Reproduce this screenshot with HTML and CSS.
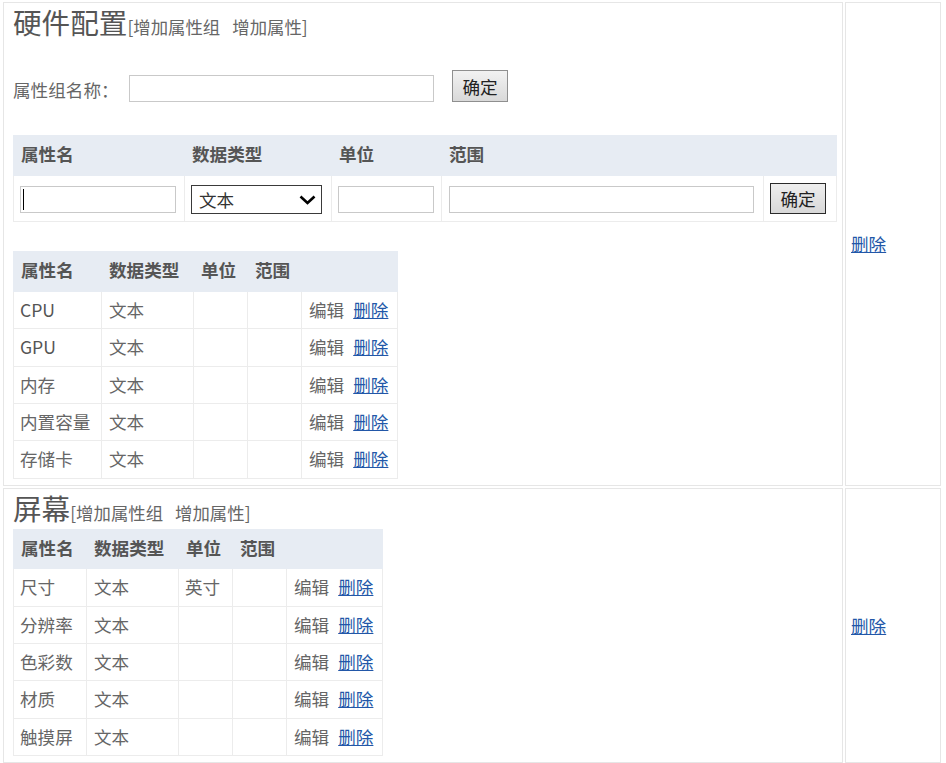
FILE: index.html
```html
<!DOCTYPE html>
<html lang="zh-CN">
<head>
<meta charset="utf-8">
<title>属性配置</title>
<link rel="stylesheet" href="styles.css">
</head>
<body>
<table class="layout">
  <tr>
    <td class="main">
      <div class="gtitle"><span class="gname">硬件配置</span><span class="gops">[<a href="#">增加属性组</a><a href="#" class="op2">增加属性</a>]</span></div>
      <div class="gform">
        <label class="glabel">属性组名称：</label>
        <input class="txt gname-input" type="text">
        <button class="btn">确定</button>
      </div>
      <table class="grid add-grid">
        <colgroup><col class="a1"><col class="a2"><col class="a3"><col class="a4"><col class="a5"></colgroup>
        <tr><th>属性名</th><th>数据类型</th><th>单位</th><th>范围</th><th></th></tr>
        <tr>
          <td><span class="caret-wrap"><input class="txt in-name" type="text"><span class="caret"></span></span></td>
          <td><span class="sel-wrap"><select class="sel"><option>文本</option></select><svg class="chev" width="17" height="10" viewBox="0 0 17 10"><path d="M1.5 1.5 L8.5 8 L15.5 1.5" fill="none" stroke="#000" stroke-width="2.6"/></svg></span></td>
          <td><input class="txt in-unit" type="text"></td>
          <td><input class="txt in-range" type="text"></td>
          <td><button class="btn btn-dark">确定</button></td>
        </tr>
      </table>
      <table class="grid attr-grid g1">
        <colgroup><col class="b1"><col class="b2"><col class="b3"><col class="b4"><col class="b5"></colgroup>
        <tr><th>属性名</th><th>数据类型</th><th>单位</th><th>范围</th><th></th></tr>
        <tr><td class="lat">CPU</td><td>文本</td><td></td><td></td><td>编辑<a href="#" class="del">删除</a></td></tr>
        <tr><td class="lat">GPU</td><td>文本</td><td></td><td></td><td>编辑<a href="#" class="del">删除</a></td></tr>
        <tr><td>内存</td><td>文本</td><td></td><td></td><td>编辑<a href="#" class="del">删除</a></td></tr>
        <tr><td>内置容量</td><td>文本</td><td></td><td></td><td>编辑<a href="#" class="del">删除</a></td></tr>
        <tr><td>存储卡</td><td>文本</td><td></td><td></td><td>编辑<a href="#" class="del">删除</a></td></tr>
      </table>
    </td>
    <td class="side"><a href="#" class="del">删除</a></td>
  </tr>
  <tr>
    <td class="main">
      <div class="gtitle"><span class="gname">屏幕</span><span class="gops">[<a href="#">增加属性组</a><a href="#" class="op2">增加属性</a>]</span></div>
      <table class="grid attr-grid g2">
        <colgroup><col class="c1"><col class="b2"><col class="b3"><col class="b4"><col class="b5"></colgroup>
        <tr><th>属性名</th><th>数据类型</th><th>单位</th><th>范围</th><th></th></tr>
        <tr><td>尺寸</td><td>文本</td><td>英寸</td><td></td><td>编辑<a href="#" class="del">删除</a></td></tr>
        <tr><td>分辨率</td><td>文本</td><td></td><td></td><td>编辑<a href="#" class="del">删除</a></td></tr>
        <tr><td>色彩数</td><td>文本</td><td></td><td></td><td>编辑<a href="#" class="del">删除</a></td></tr>
        <tr><td>材质</td><td>文本</td><td></td><td></td><td>编辑<a href="#" class="del">删除</a></td></tr>
        <tr><td>触摸屏</td><td>文本</td><td></td><td></td><td>编辑<a href="#" class="del">删除</a></td></tr>
      </table>
    </td>
    <td class="side"><a href="#" class="del">删除</a></td>
  </tr>
</table>
</body>
</html>
```
FILE: styles.css
```css
body {
  margin: 0;
  background: #fff;
  font-family: "Noto Sans CJK SC", sans-serif;
  font-size: 17.6px;
  color: #666;
}

.layout {
  border-collapse: separate;
  border-spacing: 2px;
  margin-left: 1px;
  width: 942px;
  table-layout: fixed;
}

.main,
.side {
  border: 1px solid #e6e6e6;
  box-sizing: border-box;
}

.main {
  width: 840px;
  vertical-align: top;
  padding: 4px 8px 6px 9px;
}

.side {
  width: 96px;
  vertical-align: middle;
  padding: 0 0 0 5px;
}

.gtitle {
  height: 36px;
  line-height: 36px;
  white-space: nowrap;
}

.gname {
  font-family: "Liberation Serif", "Noto Sans CJK SC", serif;
  font-size: 28.6px;
  line-height: 36px;
  color: #555;
}

.gops {
  font-size: 17.4px;
  line-height: 20px;
  color: #666;
}

.gops a {
  color: #666;
  text-decoration: none;
}

.gops .op2 {
  margin-left: 12px;
}

.gform {
  display: flex;
  align-items: flex-end;
  margin-top: 27px;
  height: 32px;
}

.glabel {
  width: 116px;
  line-height: 24px;
  color: #666;
}

.txt {
  box-sizing: border-box;
  height: 27px;
  border: 1px solid #c9c9c9;
  background: #fff;
  padding: 0 4px;
  font: inherit;
  outline: none;
}

.gname-input {
  width: 305px;
  margin-right: 18px;
}

.btn {
  box-sizing: border-box;
  width: 56px;
  height: 32px;
  padding: 0;
  border: 1px solid #8f8f8f;
  background: linear-gradient(#f2f2f2, #d9d9d9);
  font-family: "Noto Sans CJK SC", sans-serif;
  font-size: 17.6px;
  color: #222;
}

.btn-dark {
  height: 31px;
  border-color: #2a2a2a;
  background: linear-gradient(#eeeeee, #d8d8d8);
  vertical-align: middle;
}

.grid {
  border-collapse: collapse;
  table-layout: fixed;
}

.grid th {
  background: #e7ecf3;
  border: 1px solid #e7ecf3;
  text-align: left;
  font-weight: bold;
  color: #555;
  line-height: 22px;
  padding: 7px 7px 9.5px 7px;
  white-space: nowrap;
}

.grid td {
  border: 1px solid #ececec;
  line-height: 22.4px;
  padding: 7px 7px;
  white-space: nowrap;
  color: #666;
}

.grid td.lat {
  color: #555;
}

.add-grid {
  width: 823px;
  margin-top: 33px;
}

.add-grid td {
  padding: 5px 6px 7px 6px;
  line-height: 31px;
  height: 31px;
  vertical-align: middle;
}

.add-grid td:nth-child(4) {
  padding-left: 7px;
}

.a1 { width: 171px; }
.a2 { width: 147px; }
.a3 { width: 110px; }
.a4 { width: 322px; }
.a5 { width: 73px; }

.in-name { width: 156px; vertical-align: middle; }
.in-unit { width: 96px; vertical-align: middle; }
.in-range { width: 305px; vertical-align: middle; }

.caret-wrap,
.sel-wrap {
  position: relative;
  display: inline-block;
  vertical-align: middle;
  line-height: 0;
}

.caret {
  position: absolute;
  left: 3px;
  top: 3px;
  width: 1px;
  height: 21px;
  background: #000;
}

.sel {
  -webkit-appearance: none;
  appearance: none;
  box-sizing: border-box;
  width: 131px;
  height: 29px;
  border: 1px solid #3a3a3a;
  border-radius: 0;
  background: #fff;
  padding: 0 0 0 7px;
  font-family: "Noto Sans CJK SC", sans-serif;
  font-size: 17.6px;
  color: #333;
  line-height: 27px;
}

.chev {
  position: absolute;
  right: 6px;
  top: 10px;
  pointer-events: none;
}

.attr-grid.g1 {
  width: 384px;
  margin-top: 29px;
}

.attr-grid.g2 {
  width: 369px;
}

.b1 { width: 88px; }
.b2 { width: 92px; }
.b3 { width: 54px; }
.b4 { width: 54px; }
.b5 { width: 96px; }
.c1 { width: 73px; }

.grid.attr-grid td {
  padding-left: 6px;
}

.grid.attr-grid td:nth-child(2),
.grid.attr-grid td:nth-child(5) {
  padding-left: 7px;
}

.del {
  color: #2257a8;
  text-decoration: underline;
}

.grid td .del {
  margin-left: 9px;
}
```
